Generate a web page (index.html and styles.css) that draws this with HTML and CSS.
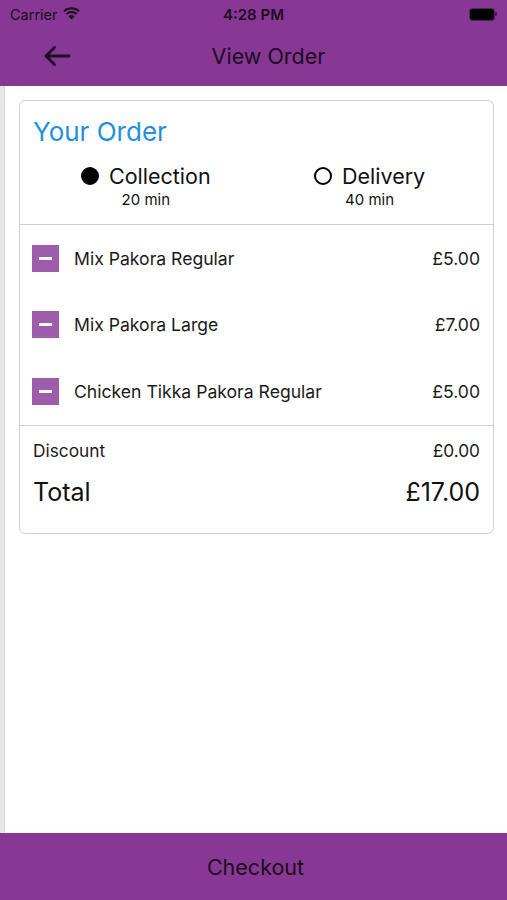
FILE: index.html
```html
<!DOCTYPE html>
<html lang="en">
<head>
<meta charset="utf-8">
<title>View Order</title>
<link rel="stylesheet" href="styles.css">
</head>
<body>
<div class="app">
  <header class="topbar">
    <div class="status">
      <div class="status-left">
        <span class="carrier">Carrier</span>
        <svg class="wifi" width="17" height="13" viewBox="0 0 17 13">
          <path d="M8.5 12.5 L5.6 9.4 A4.2 4.2 0 0 1 11.4 9.4 Z" fill="#1d0b21"/>
          <path d="M3.4 7.1 A7.4 7.4 0 0 1 13.6 7.1" stroke="#1d0b21" stroke-width="2" fill="none"/>
          <path d="M1 4.4 A10.8 10.8 0 0 1 16 4.4" stroke="#1d0b21" stroke-width="2" fill="none"/>
        </svg>
      </div>
      <span class="time">4:28 PM</span>
      <div class="status-right">
        <span class="battery"></span><span class="nub"></span>
      </div>
    </div>
    <div class="nav">
      <svg class="back" width="28" height="22" viewBox="0 0 28 22">
        <path d="M26 11 H3 M11.5 2.5 L3 11 L11.5 19.5" stroke="#1d0b21" stroke-width="2.8" fill="none" stroke-linecap="round" stroke-linejoin="round"/>
      </svg>
      <h1 class="title">View Order</h1>
    </div>
  </header>

  <main class="content">
    <section class="card">
      <div class="card-head">
        <h2 class="heading">Your Order</h2>
        <div class="options">
          <div class="option">
            <div class="option-main"><span class="radio radio-on"></span><span class="option-label">Collection</span></div>
            <span class="option-time">20 min</span>
          </div>
          <div class="option">
            <div class="option-main"><span class="radio"></span><span class="option-label">Delivery</span></div>
            <span class="option-time">40 min</span>
          </div>
        </div>
      </div>

      <ul class="items">
        <li class="item"><span class="minus"></span><span class="item-name">Mix Pakora Regular</span><span class="item-price">£5.00</span></li>
        <li class="item"><span class="minus"></span><span class="item-name">Mix Pakora Large</span><span class="item-price">£7.00</span></li>
        <li class="item"><span class="minus"></span><span class="item-name">Chicken Tikka Pakora Regular</span><span class="item-price">£5.00</span></li>
      </ul>

      <div class="summary">
        <div class="sum-row discount"><span>Discount</span><span>£0.00</span></div>
        <div class="sum-row total"><span>Total</span><span>£17.00</span></div>
      </div>
    </section>
  </main>

  <footer class="checkout">Checkout</footer>
</div>
</body>
</html>
```

FILE: styles.css
```css
* { box-sizing: border-box; }
html, body { margin: 0; padding: 0; }
body {
  font-family: Inter, "Liberation Sans", sans-serif;
  color: #111;
  background: #fff;
}
.app {
  width: 507px;
  height: 900px;
  display: flex;
  flex-direction: column;
}
.topbar {
  background: #873895;
  height: 86px;
  color: #1d0b21;
}
.status {
  height: 28px;
  display: grid;
  grid-template-columns: 1fr auto 1fr;
  align-items: center;
  padding: 0 10px;
}
.status-left { display: flex; align-items: center; gap: 5px; }
.carrier { font-size: 14.5px; }
.wifi { margin-top: -1px; }
.time { font-size: 15px; font-weight: 600; }
.status-right { display: flex; justify-content: flex-end; align-items: center; }
.battery {
  width: 24px; height: 11px;
  background: #000;
  border-radius: 3px;
  box-shadow: 0 0 0 1px rgba(40,10,45,0.5);
}
.nub { width: 2px; height: 4px; background: rgba(30,10,35,0.6); margin-left: 1px; border-radius: 0 1px 1px 0; }
.nav {
  height: 56px;
  display: flex;
  align-items: center;
  justify-content: center;
  position: relative;
}
.back { position: absolute; left: 43px; top: 17px; }
.title {
  margin: 0 0 0 30px;
  font-size: 21.5px;
  font-weight: 400;
  color: #1d0b21;
}
.content {
  flex: 1;
  padding: 14px 13px 0 19px;
  background: linear-gradient(to right, #e6e6e6 0, #e6e6e6 4px, #d8d8d8 4px, #d8d8d8 5px, #fff 5px);
}
.card {
  border: 1px solid #cfcfcf;
  border-radius: 6px;
  background: #fff;
}
.card-head {
  padding: 16px 0 15px 13px;
  border-bottom: 1px solid #d0d0d0;
}
.heading {
  margin: 0;
  font-size: 26px;
  line-height: 30px;
  font-weight: 400;
  color: #1f90de;
}
.options {
  display: grid;
  grid-template-columns: 233px auto;
  padding-left: 48px;
  margin-top: 17px;
}
.option {
  justify-self: start;
  display: flex;
  flex-direction: column;
  align-items: center;
}
.option-main { display: flex; align-items: center; gap: 10px; }
.radio {
  width: 18px; height: 18px;
  border-radius: 50%;
  border: 2px solid #000;
}
.radio-on { background: #000; }
.option-label { font-size: 21.5px; line-height: 24px; }
.option-time { font-size: 15px; line-height: 18px; margin-top: 3px; color: #111; }
.items {
  list-style: none;
  margin: 0;
  padding: 0 13px 0 12px;
  border-bottom: 1px solid #d0d0d0;
}
.item {
  height: 66.5px;
  display: flex;
  align-items: center;
}
.minus {
  width: 27px; height: 27px;
  background: #9d5dab;
  position: relative;
  flex: none;
}
.minus::after {
  content: "";
  position: absolute;
  left: 7px; right: 7px; top: 12px;
  height: 3px;
  background: #fff;
}
.item-name { font-size: 17.6px; margin-left: 15px; flex: 1; color: #1a1a1a; }
.item-price { font-size: 17.6px; color: #1a1a1a; }
.summary { padding: 15px 13px 27px 13px; }
.sum-row { display: flex; justify-content: space-between; align-items: center; }
.discount { font-size: 17.3px; line-height: 20px; color: #1a1a1a; }
.total { font-size: 25px; line-height: 28px; margin-top: 17px; color: #111; }
.checkout {
  height: 67px;
  background: #873895;
  display: flex;
  align-items: center;
  justify-content: center;
  font-size: 21.5px;
  color: #1d0b21;
  padding-left: 4px;
}
```
